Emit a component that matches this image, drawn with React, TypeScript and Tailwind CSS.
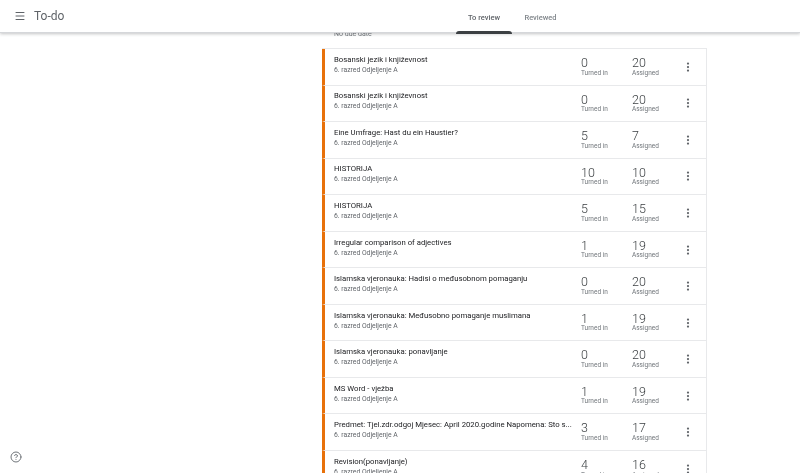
import { Menu, MoreVertical, CircleHelp } from "lucide-react";

const rows = [
  ["Bosanski jezik i književnost", 0, 20],
  ["Bosanski jezik i književnost", 0, 20],
  ["Eine Umfrage: Hast du ein Haustier?", 5, 7],
  ["HISTORIJA", 10, 10],
  ["HISTORIJA", 5, 15],
  ["Irregular comparison of adjectives", 1, 19],
  ["Islamska vjeronauka: Hadisi o međusobnom pomaganju", 0, 20],
  ["Islamska vjeronauka: Međusobno pomaganje muslimana", 1, 19],
  ["Islamska vjeronauka: ponavljanje", 0, 20],
  ["MS Word - vježba", 1, 19],
  ["Predmet: Tjel.zdr.odgoj Mjesec: April 2020.godine Napomena: Sto s...", 3, 17],
  ["Revision(ponavljanje)", 4, 16],
] as const;

export default function App() {
  return (
    <div className="relative h-[473px] w-[800px] overflow-hidden bg-white font-['Roboto',sans-serif] text-[#3c4043] blur-[0.35px]">
      <header className="relative z-10 flex h-[33px] items-center border-b border-[#d5d7da] bg-white shadow-[0_1px_3px_rgba(60,64,67,0.3)]">
        <div className="flex w-[322px] items-center">
          <Menu className="ml-[14px] h-[12px] w-[12px] text-[#5f6368]" strokeWidth={2} />
          <span className="ml-[8px] text-[12px] text-[#5f6368]">To-do</span>
        </div>
        <nav className="ml-[134px] flex h-full text-[7.5px]">
          <div className="relative flex w-[56px] items-center justify-center pt-[3px] font-medium text-[#5f6368]">
            To review
            <span className="absolute bottom-[-2px] left-0 h-[3px] w-full rounded-t-[3px] bg-[#3c4043]" />
          </div>
          <div className="ml-[5px] flex w-[47px] items-center justify-center pt-[3px] font-medium text-[#80868b]">Reviewed</div>
        </nav>
      </header>

      <main className="ml-[322px] w-[385px]">
        <p className="h-[15px] pl-[12px] text-[7px] leading-[2px] text-[#70757a]">No due date</p>
        <ul className="border-t border-[#e8e9eb]">
          {rows.map(([title, turned, assigned], i) => (
            <li
              key={i}
              className="flex h-[36.55px] items-center border-b border-r border-[#e8e9eb] border-l-[3px] border-l-[#e8710a] pl-[9px]"
            >
              <div className="w-[247px] min-w-0 pr-[6px]">
                <div className="-mt-[5px] truncate text-[7.75px] leading-[11px] text-[#202124]">{title}</div>
                <div className="mt-[1px] text-[6.8px] leading-[9px] text-[#5f6368]">6. razred Odjeljenje A</div>
              </div>
              <div className="w-[51px]">
                <div className="text-[12.5px] leading-[12.5px] font-light text-[#3c4043]">{turned}</div>
                <div className="text-[6.5px] leading-[7px] text-[#70757a]">Turned in</div>
              </div>
              <div className="w-[50px]">
                <div className="text-[12.5px] leading-[12.5px] font-light text-[#3c4043]">{assigned}</div>
                <div className="text-[6.5px] leading-[7px] text-[#70757a]">Assigned</div>
              </div>
              <MoreVertical className="h-[12px] w-[12px] text-[#5f6368]" strokeWidth={2.5} />
            </li>
          ))}
        </ul>
      </main>

      <CircleHelp className="absolute bottom-[10px] left-[10px] h-[12px] w-[12px] text-[#70757a]" strokeWidth={2} />
    </div>
  );
}
